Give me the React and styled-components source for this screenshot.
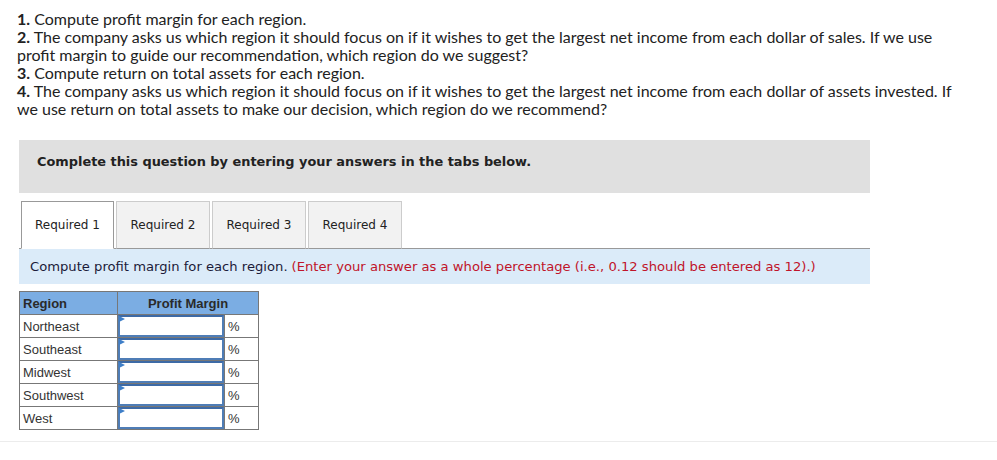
import React from "react";
import styled, { createGlobalStyle } from "styled-components";

const GlobalStyle = createGlobalStyle`
  body {
    margin: 0;
    background: #fff;
  }
`;

const Page = styled.div`
  padding-top: 10px;
  padding-bottom: 11px;
  border-bottom: 1px solid #ececec;
`;

const Prompt = styled.div`
  width: 947px;
  padding-left: 17px;
  font-family: "Lato", "Open Sans", sans-serif;
  font-size: 16px;
  line-height: 18px;
  color: #222;

  p {
    margin: 0;
  }

  b {
    font-weight: 700;
  }
`;

const Panel = styled.div`
  width: 851px;
  margin: 22px 0 0 19px;
  font-family: "DejaVu Sans", Verdana, sans-serif;
`;

const Banner = styled.div`
  height: 53px;
  box-sizing: border-box;
  padding: 14px 0 0 18px;
  background: #e0e0e0;
  font-size: 12.9px;
  line-height: 15px;
  font-weight: 700;
  color: #222;
`;

const TabList = styled.div`
  display: flex;
  gap: 2px;
  margin-top: 8px;
  padding-left: 2px;
  border-bottom: 1px solid #999;
`;

const Tab = styled.button`
  width: ${(p) => (p.$active ? "93px" : "94px")};
  height: 48px;
  margin-bottom: -1px;
  padding: 0;
  font-family: inherit;
  font-size: 12px;
  color: #222;
  cursor: pointer;
  background: ${(p) => (p.$active ? "#fff" : "#f2f2f2")};
  border: 1px solid ${(p) => (p.$active ? "#999" : "#ccc")};
  border-bottom: ${(p) => (p.$active ? "1px solid #fff" : "1px solid #999")};
`;

const Instruction = styled.div`
  height: 35px;
  display: flex;
  align-items: center;
  padding-left: 11px;
  background: #dbebf9;
  font-size: 13.15px;
  color: #1b1b3a;

  span {
    color: #c0142a;
    margin-left: 4px;
  }
`;

const Table = styled.table`
  margin-top: 7px;
  border-collapse: collapse;
  font-family: "Liberation Sans", Arial, sans-serif;
  font-size: 13px;
  color: #333;
`;

const Head = styled.th`
  height: 22px;
  padding: 0 3px;
  background: #7badE3;
  border: 1px solid #777;
  font-weight: 700;
  font-size: 13px;
  text-align: ${(p) => p.$align || "left"};
  color: #2a2a2a;
`;

const Cell = styled.td`
  height: 22px;
  padding: ${(p) => (p.$input ? "0" : "0 3px")};
  border: 1px solid #777;
  width: ${(p) => p.$w};
  box-sizing: border-box;
  vertical-align: middle;
`;

const InputWrap = styled.div`
  position: relative;
  height: 22px;
`;

const Flag = styled.span`
  position: absolute;
  top: 1px;
  left: 1px;
  width: 0;
  height: 0;
  border-top: 3px solid transparent;
  border-bottom: 3px solid transparent;
  border-left: 6px solid #3f7fc8;
`;

const Input = styled.input`
  display: block;
  width: 100%;
  height: 22px;
  box-sizing: border-box;
  border: 2px solid #4f7db6;
  border-top-color: #3d6aa6;
  padding: 0 4px;
  font-family: inherit;
  font-size: 13px;
  outline: none;
`;

const regions = ["Northeast", "Southeast", "Midwest", "Southwest", "West"];
const tabs = ["Required 1", "Required 2", "Required 3", "Required 4"];

export default function App() {
  return (
    <Page>
      <GlobalStyle />
      <Prompt>
        <p>
          <b>1.</b> Compute profit margin for each region.
        </p>
        <p>
          <b>2.</b> The company asks us which region it should focus on if it wishes to get the largest net income
          from each dollar of sales. If we use profit margin to guide our recommendation, which region do we
          suggest?
        </p>
        <p>
          <b>3.</b> Compute return on total assets for each region.
        </p>
        <p>
          <b>4.</b> The company asks us which region it should focus on if it wishes to get the largest net income
          from each dollar of assets invested. If we use return on total assets to make our decision, which region
          do we recommend?
        </p>
      </Prompt>

      <Panel>
        <Banner>Complete this question by entering your answers in the tabs below.</Banner>

        <TabList>
          {tabs.map((t, i) => (
            <Tab key={t} $active={i === 0} type="button">
              {t}
            </Tab>
          ))}
        </TabList>

        <Instruction>
          Compute profit margin for each region.
          <span>(Enter your answer as a whole percentage (i.e., 0.12 should be entered as 12).)</span>
        </Instruction>

        <Table>
          <thead>
            <tr>
              <Head>Region</Head>
              <Head colSpan={2} $align="center">
                Profit Margin
              </Head>
            </tr>
          </thead>
          <tbody>
            {regions.map((r) => (
              <tr key={r}>
                <Cell $w="98px">{r}</Cell>
                <Cell $w="107px" $input>
                  <InputWrap>
                    <Flag />
                    <Input aria-label={r} />
                  </InputWrap>
                </Cell>
                <Cell $w="34px">%</Cell>
              </tr>
            ))}
          </tbody>
        </Table>
      </Panel>
    </Page>
  );
}
